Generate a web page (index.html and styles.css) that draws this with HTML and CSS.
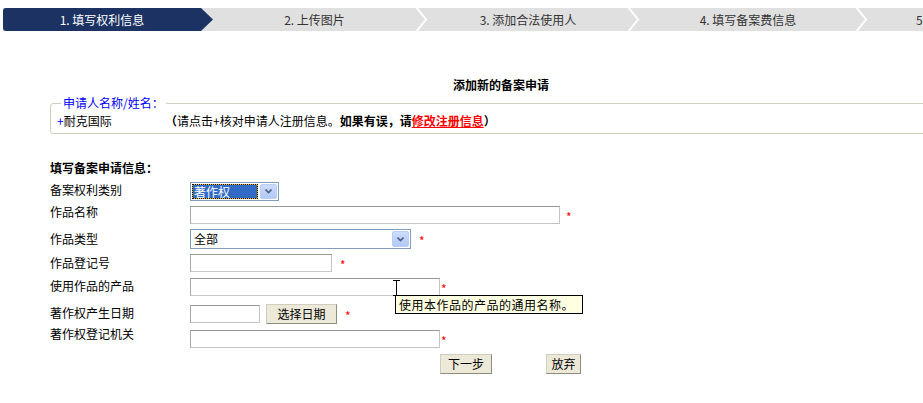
FILE: index.html
```html
<!DOCTYPE html>
<html lang="zh-CN">
<head>
    <meta charset="UTF-8">
    <title>添加新的备案申请</title>
    <link rel="stylesheet" href="styles.css">
</head>
<body>
    <div class="steps">
        <div class="step step-active">1. 填写权利信息</div>
        <div class="step step-two">2. 上传图片<svg class="sep" width="13" height="23"><polyline points="1,-1 11,11.5 1,24" fill="none" stroke="#fff" stroke-width="2"/></svg></div>
        <div class="step step-three">3. 添加合法使用人<svg class="sep" width="13" height="23"><polyline points="1,-1 11,11.5 1,24" fill="none" stroke="#fff" stroke-width="2"/></svg></div>
        <div class="step step-four">4. 填写备案费信息<svg class="sep" width="13" height="23"><polyline points="1,-1 11,11.5 1,24" fill="none" stroke="#fff" stroke-width="2"/></svg></div>
        <div class="step step-last">5.</div>
    </div>

    <div class="main">
        <div class="title">添加新的备案申请</div>

        <fieldset class="applicant">
            <legend>申请人名称/姓名：</legend>
            <span class="name"><span class="plus">+</span>耐克国际</span><span class="note"><b>（</b>请点击+核对申请人注册信息。<b>如果有误，请</b><a class="fix" href="#">修改注册信息</a><b>）</b></span>
        </fieldset>

        <div class="form-head">填写备案申请信息：</div>

        <div class="fields">
            <div class="row">
                <span class="label">备案权利类别</span>
                <div class="select select-short">
                    <span class="select-value picked">著作权</span>
                    <span class="select-btn"><svg width="7" height="5"><polyline points="0.5,0.5 3.5,3.5 6.5,0.5" fill="none" stroke="#4d6185" stroke-width="1.6"/></svg></span>
                </div>
            </div>
            <div class="row">
                <span class="label label-up">作品名称</span>
                <input class="text w-long" type="text">
                <span class="star">*</span>
            </div>
            <div class="row">
                <span class="label label-flat">作品类型</span>
                <div class="select select-long">
                    <span class="select-value">全部</span>
                    <span class="select-btn"><svg width="7" height="5"><polyline points="0.5,0.5 3.5,3.5 6.5,0.5" fill="none" stroke="#4d6185" stroke-width="1.6"/></svg></span>
                </div>
                <span class="star star-wide">*</span>
            </div>
            <div class="row">
                <span class="label label-flat">作品登记号</span>
                <input class="text w-small" type="text">
                <span class="star star-wide">*</span>
            </div>
            <div class="row row-tip">
                <span class="label">使用作品的产品</span>
                <input class="text w-mid" type="text">
                <span class="star star-tight">*</span>
                <svg class="ibeam" width="7" height="16"><path d="M0 0.5h7M3.5 0.5v15M0 15.5h7" stroke="#000" fill="none"/></svg>
                <div class="tip">使用本作品的产品的通用名称。</div>
            </div>
            <div class="row">
                <span class="label">著作权产生日期</span>
                <input class="text w-date" type="text">
                <button class="btn date-btn" type="button">选择日期</button>
                <span class="star star-wide">*</span>
            </div>
            <div class="row">
                <span class="label label-up-more">著作权登记机关</span>
                <input class="text w-mid" type="text">
                <span class="star star-tight">*</span>
            </div>
        </div>

        <div class="actions">
            <button class="btn next-btn" type="button">下一步</button>
            <button class="btn quit-btn" type="button">放弃</button>
        </div>
    </div>
</body>
</html>
```

FILE: styles.css
```css
html, body {
    overflow: hidden;
}

body {
    margin: 0;
    font-family: "Noto Sans CJK SC", "Noto Sans", sans-serif;
    font-size: 12px;
    line-height: 14px;
    color: #000;
    background: #fff;
}

/* step bar */
.steps {
    display: flex;
    height: 23px;
    margin: 8px 0 0 3px;
    background: #e0e0e0;
    white-space: nowrap;
}

.step {
    position: relative;
    flex: none;
    width: 210px;
    padding-right: 12px;
    box-sizing: border-box;
    line-height: 23px;
    text-align: center;
    color: #333;
}

.step-active {
    background: #1b3262;
    color: #fff;
    border-radius: 3px 0 0 3px;
    clip-path: polygon(0 0, calc(100% - 12px) 0, 100% 50%, calc(100% - 12px) 100%, 0 100%);
}

.step-two {
    width: 215px;
}

.step-three {
    width: 212px;
}

.step-four {
    width: 228px;
}

.step-last {
    width: 120px;
    text-align: left;
    padding-left: 48px;
}

.sep {
    position: absolute;
    right: 0;
    top: 0;
}

/* main block */
.main {
    width: 902px;
    margin-left: 50px;
}

.title {
    margin-top: 47px;
    text-align: center;
    font-weight: bold;
}

.applicant {
    margin: 4px 0 0;
    padding: 4px 6px 5px;
    border: 1px solid #d0d0bf;
    border-radius: 3px;
    white-space: nowrap;
}

.applicant legend {
    margin-left: 4px;
    padding: 0 2px;
    color: #0000ff;
}

.name {
    display: inline-block;
    width: 108px;
}

.plus {
    color: #0000ff;
}

.fix {
    color: #ff0000;
    font-weight: bold;
    text-decoration: underline;
}

.form-head {
    margin-top: 27px;
    font-weight: bold;
}

/* rows */
.row {
    display: flex;
    align-items: center;
}

.fields .row:nth-child(1) { margin-top: 7px; }
.fields .row:nth-child(2) { margin-top: 5px; }
.fields .row:nth-child(3) { margin-top: 5px; }
.fields .row:nth-child(4) { margin-top: 5px; }
.fields .row:nth-child(5) { margin-top: 6px; }
.fields .row:nth-child(6) { margin-top: 8px; }
.fields .row:nth-child(7) { margin-top: 6px; }

/* negative top margins lift a centred label without growing the row */
.label {
    flex: none;
    width: 140px;
    margin-top: -3px;
}

.label-flat {
    margin-top: 0;
}

.label-up {
    margin-top: -7px;
}

.label-up-more {
    margin-top: -11px;
}

.text {
    box-sizing: border-box;
    height: 18px;
    margin: 0;
    padding: 0 2px;
    border: 1px solid;
    border-color: #979797 #c4c4c4 #c4c4c4 #a9a9a9;
    background: #fff;
    font: inherit;
}

.w-long { width: 370px; }
.w-mid { width: 250px; }
.w-small { width: 142px; }
.w-date { width: 70px; }

.select {
    display: flex;
    gap: 2px;
    box-sizing: border-box;
    padding: 1px;
    border: 1px solid #7f9db9;
    background: #fff;
}

.select-short {
    width: 89px;
    height: 19px;
}

.select-long {
    width: 221px;
    height: 20px;
}

.select-value {
    flex: 1;
    padding-left: 2px;
    line-height: 15px;
}

.select-value.picked {
    background: #316ac5;
    color: #fff;
    box-shadow: inset 0 0 0 1px #f0c000;
    outline: 1px dotted #000;
    outline-offset: -1px;
}

.select-btn {
    flex: none;
    display: flex;
    align-items: center;
    justify-content: center;
    width: 17px;
    box-sizing: border-box;
    border: 1px solid #b9cdf9;
    border-radius: 2px;
    background: linear-gradient(#cddcfe, #b2c8f7);
}

.star {
    margin: 4px 0 0 6px;
    color: #ff0000;
}

.star-wide {
    margin-left: 8px;
}

.star-tight {
    margin-left: 1px;
}

.btn {
    box-sizing: border-box;
    height: 20px;
    margin: 0;
    padding: 0;
    border: 1px solid;
    border-color: #cfccc0 #8e8b7f #8e8b7f #cfccc0;
    background: #ece9d8;
    color: #000;
    font: inherit;
}

.date-btn {
    width: 71px;
    margin-left: 6px;
}

/* hover tooltip */
.row-tip {
    position: relative;
}

.ibeam {
    position: absolute;
    left: 343px;
    top: 2px;
}

.tip {
    position: absolute;
    left: 345px;
    top: 17px;
    padding: 2px 8px 2px 3px;
    border: 1px solid #000;
    background: #ffffe1;
    line-height: 13px;
    letter-spacing: 0.5px;
    white-space: nowrap;
}

.actions {
    display: flex;
    margin: 6px 0 0 390px;
}

.next-btn {
    width: 52px;
}

.quit-btn {
    width: 35px;
    margin-left: 54px;
}
```
